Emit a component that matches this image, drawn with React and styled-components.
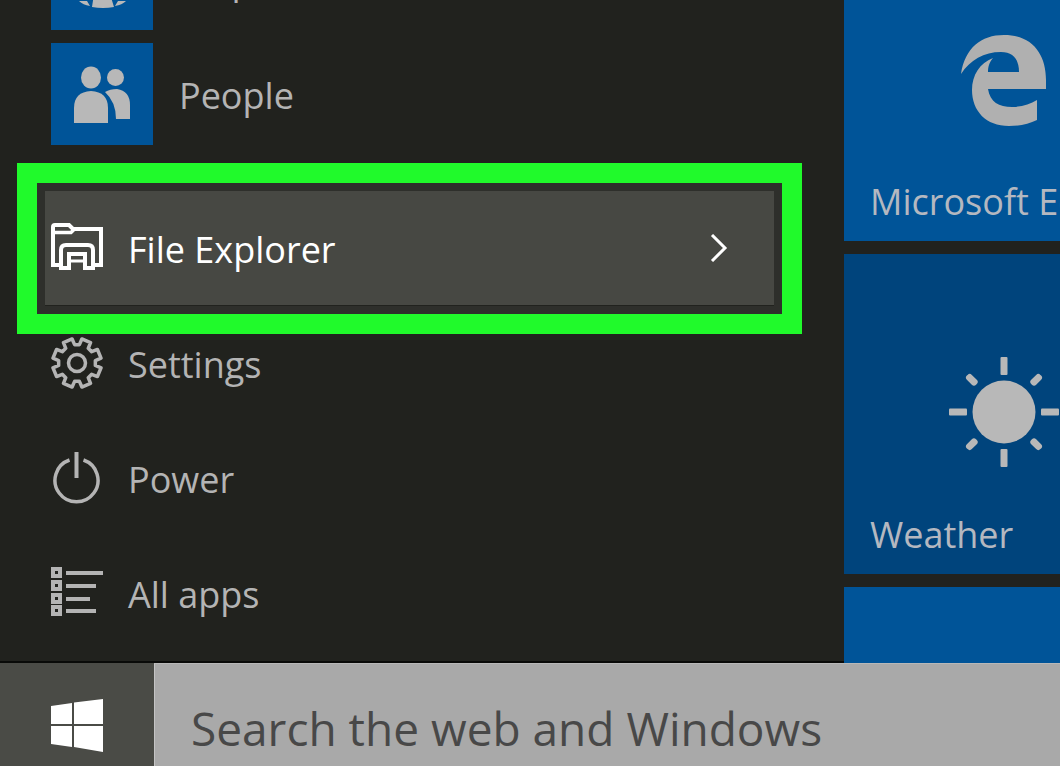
import React from "react";
import styled, { createGlobalStyle } from "styled-components";

const GlobalStyle = createGlobalStyle`
  *, *::before, *::after { box-sizing: border-box; }
  body { margin: 0; background: #21221e; font-family: "Open Sans", "Noto Sans", sans-serif; }
  button, input { font: inherit; }
`;

const Desktop = styled.div`
  display: flex;
  flex-direction: column;
  height: 100vh;
  overflow: hidden;
  background: #21221e;
`;

const StartMenu = styled.main`
  flex: 1;
  min-height: 0;
  display: flex;
  overflow: hidden;
`;

const Sidebar = styled.nav`
  flex: 1;
  min-width: 0;
  display: flex;
  flex-direction: column;
  justify-content: flex-end;
  padding: 0 69px 11px 45px;
  border-bottom: 2px solid #090a08;
`;

const AppList = styled.div`
  display: flex;
  flex-direction: column;
  gap: 13px;
  margin-bottom: 45px;
`;

const itemText = `
  border: 0;
  background: none;
  text-align: left;
  white-space: nowrap;
  font-size: 36px;
  line-height: 48px;
`;

const AppItem = styled.button`
  ${itemText}
  display: flex;
  align-items: center;
  gap: 26px;
  padding: 0 6px;
  color: #b4b4b4;
`;

const AppTile = styled.span`
  display: flex;
  width: 102px;
  height: 102px;
  background: #005498;
`;

const SystemItem = styled.button`
  ${itemText}
  position: relative;
  flex: none;
  display: flex;
  align-items: center;
  gap: 25px;
  height: 115px;
  padding: 0 47px 0 6px;
  color: ${(p) => (p.$active ? "#fff" : "#b4b4b4")};
  background: ${(p) => (p.$active ? "#474843" : "transparent")};
`;

const ItemLabel = styled.span`
  flex: 1;
  padding-top: 4px;
`;

const Highlight = styled.span`
  position: absolute;
  inset: -27px -27px -29px -28px;
  border: 20px solid #20fa2b;
  box-shadow: inset 0 0 0 8px #2e2f2b;
  pointer-events: none;
`;

const Tiles = styled.section`
  flex: 0 0 216px;
  display: flex;
  flex-direction: column;
  justify-content: flex-end;
  gap: 13px;
  overflow: hidden;
`;

const Tile = styled.a`
  flex: none;
  display: flex;
  flex-direction: column;
  align-items: center;
  justify-content: space-between;
  width: 320px;
  height: ${(p) => (p.$peek ? 76 : 320)}px;
  padding: ${(p) => (p.$peek ? 0 : `${p.$iconTop}px 26px 15px`)};
  background: ${(p) => (p.$deep ? "#00447c" : "#005498")};
  color: #b4b8c0;
  text-decoration: none;
  font-size: 36px;
  line-height: 48px;
  white-space: nowrap;
`;

const TileLabel = styled.span`
  align-self: flex-start;
`;

const Taskbar = styled.footer`
  flex: none;
  display: flex;
  height: 103px;
`;

const StartButton = styled.button`
  flex: 0 0 154px;
  display: flex;
  align-items: center;
  padding: 23px 0 0 50px;
  border: 0;
  background: #4a4b46;
`;

const SearchBox = styled.input`
  flex: 1;
  min-width: 0;
  padding: 25px 36px 0;
  border: 0;
  border-left: 1px solid #c4c4c4;
  border-top: 1px solid #b8b8b8;
  border-radius: 0;
  outline: 0;
  background: #a9a9a9;
  color: #444;
  font-size: 46px;
  &::placeholder { color: #484848; opacity: 1; }
`;

const MapsIcon = () => (
  <svg width="102" height="102" viewBox="0 0 102 102" fill="#b8b8b8" aria-hidden="true">
    <path d="M43 66h16l4 13q-11 2-22 0zM28 73h8l3 5q-7-1-11-5zM75 73h-8l-3 5q7-1 11-5z" />
  </svg>
);

const PeopleIcon = () => (
  <svg width="102" height="102" viewBox="0 0 102 102" fill="#b8b8b8" aria-hidden="true">
    <ellipse cx="40" cy="34.500" rx="10" ry="11" />
    <circle cx="64.500" cy="34.500" r="8.500" />
    <path d="M23 80V65q0-16 17-17 17 1 17 17v15z" />
    <path d="M54 49q5-3 12-3 13 2 13 16v14H65q0-17-11-27z" />
  </svg>
);

const ExplorerIcon = () => (
  <svg width="52" height="52" viewBox="0 0 52 52" fill="none" stroke="#fff" strokeWidth="4" aria-hidden="true">
    <path d="M10 43H2V5q0-2 2-2h14l4 4h28v36h-8" />
    <path d="M2 10.500h18l3-3" strokeWidth="3.500" />
    <path d="M10 46V28q0-5 5-5h22q5 0 5 5v18h-8V32H18v14z" />
    <path d="M18 39h16" strokeWidth="3" />
  </svg>
);

const gearPath = (() => {
  const pts = [];
  for (let i = 0; i < 8; i += 1) {
    const base = (i * 45 + 22.5) * (Math.PI / 180);
    [[-15, 18.5], [-11, 24.5], [11, 24.5], [15, 18.5]].forEach(([deg, r]) => {
      const a = base + (deg * Math.PI) / 180;
      pts.push(`${(26 + r * Math.cos(a)).toFixed(2)} ${(26 + r * Math.sin(a)).toFixed(2)}`);
    });
  }
  return `M${pts.join("L")}Z`;
})();

const GearIcon = () => (
  <svg width="52" height="52" viewBox="0 0 52 52" fill="none" stroke="#b4b4b4" strokeWidth="3.500" strokeLinejoin="round" aria-hidden="true">
    <path d={gearPath} />
    <circle cx="26" cy="26" r="8.500" />
  </svg>
);

const PowerIcon = () => (
  <svg width="52" height="52" viewBox="0 0 52 52" fill="none" stroke="#b4b4b4" strokeWidth="3.500" aria-hidden="true">
    <path d="M18.500 8A21.500 21.500 0 1 0 32.500 8" />
    <path d="M25.500 0v26" strokeWidth="4" />
  </svg>
);

const AllAppsIcon = () => (
  <svg width="52" height="52" viewBox="0 0 52 52" aria-hidden="true">
    {[[1, 52], [14, 45], [27, 39], [39, 45]].map(([y, end]) => (
      <g key={y} fill="#b4b4b4">
        <rect x="0" y={y - 1} width="11" height="11" />
        <rect x="4" y={y + 3} width="3" height="3" fill="#21221e" />
        <rect x="15" y={y + 3} width={end - 15} height="4" />
      </g>
    ))}
  </svg>
);

const ChevronIcon = () => (
  <svg width="18" height="28" viewBox="0 0 18 28" fill="none" stroke="#fff" strokeWidth="3" aria-hidden="true">
    <path d="M2 1l13 13L2 27" />
  </svg>
);

const EdgeIcon = () => (
  <svg width="86" height="92" viewBox="0 0 86 92" fill="#b0b0b0" aria-hidden="true">
    <path d="M0 40C4 14 20 1 43 1c29 0 42 20 42 45v9H27c2 13 11 18 24 18 10 0 18-3 25-7v20c-8 4-17 6-28 6C25 92 11 77 11 56c0-15 8-27 21-32-4 5-5 9-5 14h31c0-13-6-20-18-20C23 18 9 26 0 40z" />
  </svg>
);

const SunIcon = () => (
  <svg width="110" height="110" viewBox="0 0 110 110" fill="#b8b8b8" aria-hidden="true">
    <circle cx="55" cy="55" r="31.500" />
    {[0, 45, 90, 135, 180, 225, 270, 315].map((angle) => (
      <rect key={angle} x="51.500" y={angle % 90 ? 3 : 0} width="7" height={angle % 90 ? 13 : 18} rx={angle % 90 ? 3 : 1} transform={`rotate(${angle} 55 55)`} />
    ))}
  </svg>
);

const WindowsIcon = () => (
  <svg width="54" height="54" viewBox="0 0 54 54" fill="#fff" aria-hidden="true">
    <path d="M1 7l21-3v21H1zM24 3.500L53 0v25H24zM1 27h21v21L1 45zM24 27h29v26l-29-5z" />
  </svg>
);

const systemItems = [
  { label: "File Explorer", Icon: ExplorerIcon, active: true },
  { label: "Settings", Icon: GearIcon },
  { label: "Power", Icon: PowerIcon },
  { label: "All apps", Icon: AllAppsIcon },
];

export default function App() {
  return (
    <Desktop>
      <GlobalStyle />
      <StartMenu>
        <Sidebar aria-label="Start menu">
          <AppList>
            <AppItem type="button">
              <AppTile><MapsIcon /></AppTile>
              <ItemLabel>Maps</ItemLabel>
            </AppItem>
            <AppItem type="button">
              <AppTile><PeopleIcon /></AppTile>
              <ItemLabel>People</ItemLabel>
            </AppItem>
          </AppList>
          {systemItems.map(({ label, Icon, active }) => (
            <SystemItem key={label} type="button" $active={active}>
              <Icon />
              <ItemLabel>{label}</ItemLabel>
              {active && <ChevronIcon />}
              {active && <Highlight />}
            </SystemItem>
          ))}
        </Sidebar>
        <Tiles aria-label="Pinned apps">
          <Tile href="#edge" $iconTop={113}>
            <EdgeIcon />
            <TileLabel>Microsoft Edge</TileLabel>
          </Tile>
          <Tile href="#weather" $iconTop={103} $deep>
            <SunIcon />
            <TileLabel>Weather</TileLabel>
          </Tile>
          <Tile href="#more" $peek aria-label="More tiles" />
        </Tiles>
      </StartMenu>
      <Taskbar>
        <StartButton type="button" aria-label="Start"><WindowsIcon /></StartButton>
        <SearchBox type="text" aria-label="Search" placeholder="Search the web and Windows" />
      </Taskbar>
    </Desktop>
  );
}
